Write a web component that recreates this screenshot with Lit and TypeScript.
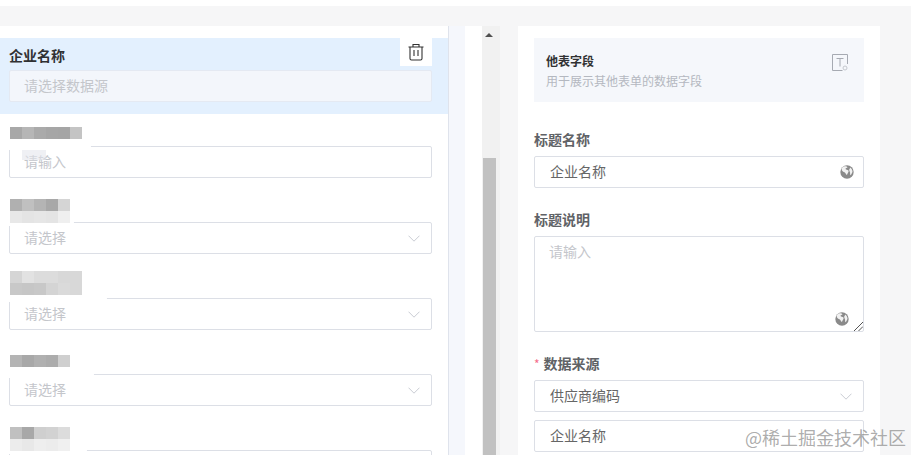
import { LitElement, html, css, svg } from "lit";
import { customElement } from "lit/decorators.js";

const chevron = html`<svg class="chev" viewBox="0 0 12 7" width="12" height="7"><path d="M.5.7 6 6.200 11.500.7" fill="none" stroke="#c9ccd3" stroke-width="1"/></svg>`;

const globe = svg`<circle cx="7" cy="7" r="6.700" fill="#8a8a8a"/>
<path d="M4.600 1.200C6 1 7 1.500 7.600 2.300 6.800 3 5.800 3 5.500 3.900 6.300 4.700 7.400 4.500 8.200 5.300 8.800 6 8.700 7 8 7.700 7.500 8.300 7.400 9.200 6.900 9.900 6 9.500 5.700 8.500 5.100 7.800 4.400 7 3 7 2.400 6 1.900 5.200 1.700 4 1.400 3.400 2.300 2.300 3.300 1.600 4.600 1.200Z" fill="#f1f1f1"/>
<path d="M10.300 2.600C11.700 3.800 12.600 5.400 12.500 7 11.800 8 11.500 9.300 10.600 10.300 9.900 9.600 10.200 8.300 10 7.300 9.800 6.400 9.200 5.900 9.200 5 9.300 4.100 10 3.500 10.300 2.600Z" fill="#f1f1f1"/>`;

interface Blur { top: number; cols: number; cells: string[]; }
interface Row { blur: Blur; text: string; select: boolean; smudge: number; obscured?: boolean; }

const rows: Row[] = [
  { blur: { top: 13, cols: 6, cells: ["#a8a8a8", "#b6b6b6", "#aaa", "#a6a6a6", "#a5a5a5", "#c4c4c4"] }, text: "请输入", select: false, smudge: 82, obscured: true },
  { blur: { top: 9, cols: 5, cells: ["#b0b0b0", "#c0c0c0", "#b4b4b4", "#a8a8a8", "#d5d5d5", "#e8e8e8", "#e4e4e4", "#e6e6e6", "#e4e4e4", "#efefef"] }, text: "请选择", select: true, smudge: 65 },
  { blur: { top: 5, cols: 6, cells: ["#d5d5d5", "#e2e2e2", "#dcdcdc", "#dcdcdc", "#d8d8d8", "#d8d8d8", "#c8c8c8", "#c6c6c6", "#c8c8c8", "#d4d4d4", "#dadada", "#d8d8d8"] }, text: "请选择", select: true, smudge: 98 },
  { blur: { top: 13, cols: 5, cells: ["#b4b4b4", "#a8a8a8", "#b0b0b0", "#acacac", "#cfcfcf"] }, text: "请选择", select: true, smudge: 85 },
  { blur: { top: 9, cols: 5, cells: ["#c0c0c0", "#a8a8a8", "#cfcfcf", "#d2d2d2", "#dcdcdc", "#ececec", "#e8e8e8", "#eeeeee", "#ececec", "#f0f0f0"] }, text: "", select: false, smudge: 78 },
];

@customElement("app-root")
export class AppRoot extends LitElement {
  static styles = css`
    :host {
      display: block;
      position: relative;
      height: 455px;
      overflow: hidden;
      background: #f6f6f7;
      font-family: "Noto Sans CJK SC", "Liberation Sans", sans-serif;
      font-size: 14px;
      color: #666;
    }
    .topbar { height: 6px; background: #fff; }
    .stage {
      display: grid;
      grid-template-columns: 449px 16px 17px 18px 18px 362px 1fr;
      margin-top: 20px;
      height: 429px;
    }
    .left {
      background: #fff;
      border-right: 1px solid #dfe3ec;
      padding-top: 12px;
      overflow: hidden;
    }
    .gutter { background: #f5f7fc; }
    .white { background: #fff; }
    .track {
      display: flex;
      flex-direction: column;
      background: #f1f1f1;
      padding-left: 1px;
    }
    .arrow {
      width: 0; height: 0;
      margin: 7px 0 0 2px;
      border-left: 4px solid transparent;
      border-right: 4px solid transparent;
      border-bottom: 4px solid #505050;
    }
    .thumb { width: 13px; height: 300px; margin-top: 121px; background: #c1c1c1; }
    .field {
      position: relative;
      height: 76px;
      box-sizing: border-box;
      padding: 0 16px 12px 9px;
    }
    .field.active { background: #e3f0fe; }
    .label-area { height: 32px; display: flow-root; }
    .title { line-height: 34px; font-weight: 700; color: #303133; }
    .mosaic {
      position: relative;
      z-index: 1;
      display: grid;
      grid-auto-rows: 12px;
      grid-template-columns: repeat(var(--cols), 12px);
      margin-left: 1px;
      width: max-content;
    }
    .input {
      position: relative;
      display: flex;
      align-items: center;
      justify-content: space-between;
      height: 32px;
      box-sizing: border-box;
      padding: 0 15px 2px;
      background: #fff;
      border: 1px solid #dcdfe6;
      border-radius: 2px;
      line-height: 28px;
    }
    .input.disabled { background: #f3f6fb; border-color: #e4e9f2; }
    .ph { color: #c4c6cb; margin-left: -1px; }
    .smudge {
      position: absolute;
      left: -1px;
      top: -3px;
      height: 6px;
      background: #fff;
      border-radius: 0 3px 3px 0;
    }
    .veil {
      position: absolute;
      left: 12px;
      top: 3px;
      width: 24px;
      height: 10px;
      background: rgba(225, 228, 235, .55);
    }
    .chev { margin-right: -4px; position: relative; top: 1px; }
    .trash {
      position: absolute;
      top: 0;
      right: 16px;
      width: 32px;
      height: 28px;
      background: #fff;
      display: flex;
      align-items: center;
      justify-content: center;
    }
    .card {
      background: #fff;
      padding: 12px 16px 0;
      overflow: hidden;
    }
    .info {
      display: flex;
      justify-content: space-between;
      height: 64px;
      box-sizing: border-box;
      padding: 14px 16px 0 12px;
      background: #f5f7fb;
      margin-bottom: 22px;
    }
    .info-title { font-size: 12px; font-weight: 700; color: #303133; line-height: 18px; }
    .info-hint { font-size: 12px; color: #b4b8c0; line-height: 18px; margin-top: 2px; }
    .info svg { margin-top: 2px; }
    .flabel { height: 32px; line-height: 30px; font-weight: 700; color: #606266; }
    .req { color: #f56c8c; font-weight: 400; margin-right: 4px; font-size: 12px; }
    .block { margin-bottom: 16px; }
    .globe { margin-right: -6px; flex: none; position: relative; top: 1px; }
    .area {
      position: relative;
      height: 96px;
      box-sizing: border-box;
      padding: 0 15px;
      border: 1px solid #dcdfe6;
      border-radius: 2px;
      line-height: 28px;
    }
    .area .globe { position: absolute; right: 14px; bottom: 5px; top: auto; margin: 0; }
    .grip { position: absolute; right: 0; bottom: 0; }
    .gap { height: 8px; }
    .mark {
      position: absolute;
      left: 745px;
      top: 424px;
      font-size: 18px;
      line-height: 26px;
      color: rgba(120, 120, 120, .62);
      white-space: nowrap;
    }
  `;

  private field(r: Row) {
    return html`<div class="field">
      <div class="label-area">
        <div class="mosaic" style="--cols:${r.blur.cols};margin-top:${r.blur.top}px">
          ${r.blur.cells.map((c) => html`<i style="background:${c}"></i>`)}
        </div>
      </div>
      <div class="input">
        ${r.text ? html`<span class="ph">${r.text}</span>` : ""}
        ${r.select ? chevron : ""}
        <span class="smudge" style="width:${r.smudge}px"></span>
        ${r.obscured ? html`<span class="veil"></span>` : ""}
      </div>
    </div>`;
  }

  render() {
    return html`
      <div class="topbar"></div>
      <div class="stage">
        <section class="left">
          <div class="field active">
            <div class="label-area title">企业名称</div>
            <div class="input disabled"><span class="ph">请选择数据源</span></div>
            <div class="trash">
              <svg width="16" height="18" viewBox="0 0 16 18" fill="none" stroke="#333" stroke-width="1.100">
                <path d="M.5 4h15M5 4V1.500h6V4M2 4v11.500q0 1.500 1.500 1.500h9q1.500 0 1.500-1.500V4M6 7v6M10 7v6"/>
              </svg>
            </div>
          </div>
          ${rows.map((r) => this.field(r))}
        </section>
        <div class="gutter"></div>
        <div class="white"></div>
        <div class="track"><div class="arrow"></div><div class="thumb"></div></div>
        <div></div>
        <section class="card">
          <div class="info">
            <div>
              <div class="info-title">他表字段</div>
              <div class="info-hint">用于展示其他表单的数据字段</div>
            </div>
            <svg width="16" height="17" viewBox="0 0 16 17" fill="none" stroke="#a6aab2" stroke-width="1">
              <path d="M15.500 10V.5H.5v16h10M4.500 4.500h7M8 4.500v8"/>
              <circle cx="13" cy="14" r="2" stroke="#c4c8ce"/>
            </svg>
          </div>
          <div class="block">
            <div class="flabel">标题名称</div>
            <div class="input"><span>企业名称</span><svg class="globe" width="14" height="14" viewBox="0 0 14 14">${globe}</svg></div>
          </div>
          <div class="block">
            <div class="flabel">标题说明</div>
            <div class="area">
              <span class="ph">请输入</span>
              <svg class="globe" width="14" height="14" viewBox="0 0 14 14">${globe}</svg>
              <svg class="grip" width="9" height="9" viewBox="0 0 9 9" stroke="#555" stroke-width="1"><path d="M0 9 9 0M4.500 9 9 4.500"/></svg>
            </div>
          </div>
          <div class="flabel"><span class="req">*</span>数据来源</div>
          <div class="input"><span>供应商编码</span>${chevron}</div>
          <div class="gap"></div>
          <div class="input"><span>企业名称</span></div>
        </section>
        <div></div>
      </div>
      <div class="mark">@稀土掘金技术社区</div>
    `;
  }
}
